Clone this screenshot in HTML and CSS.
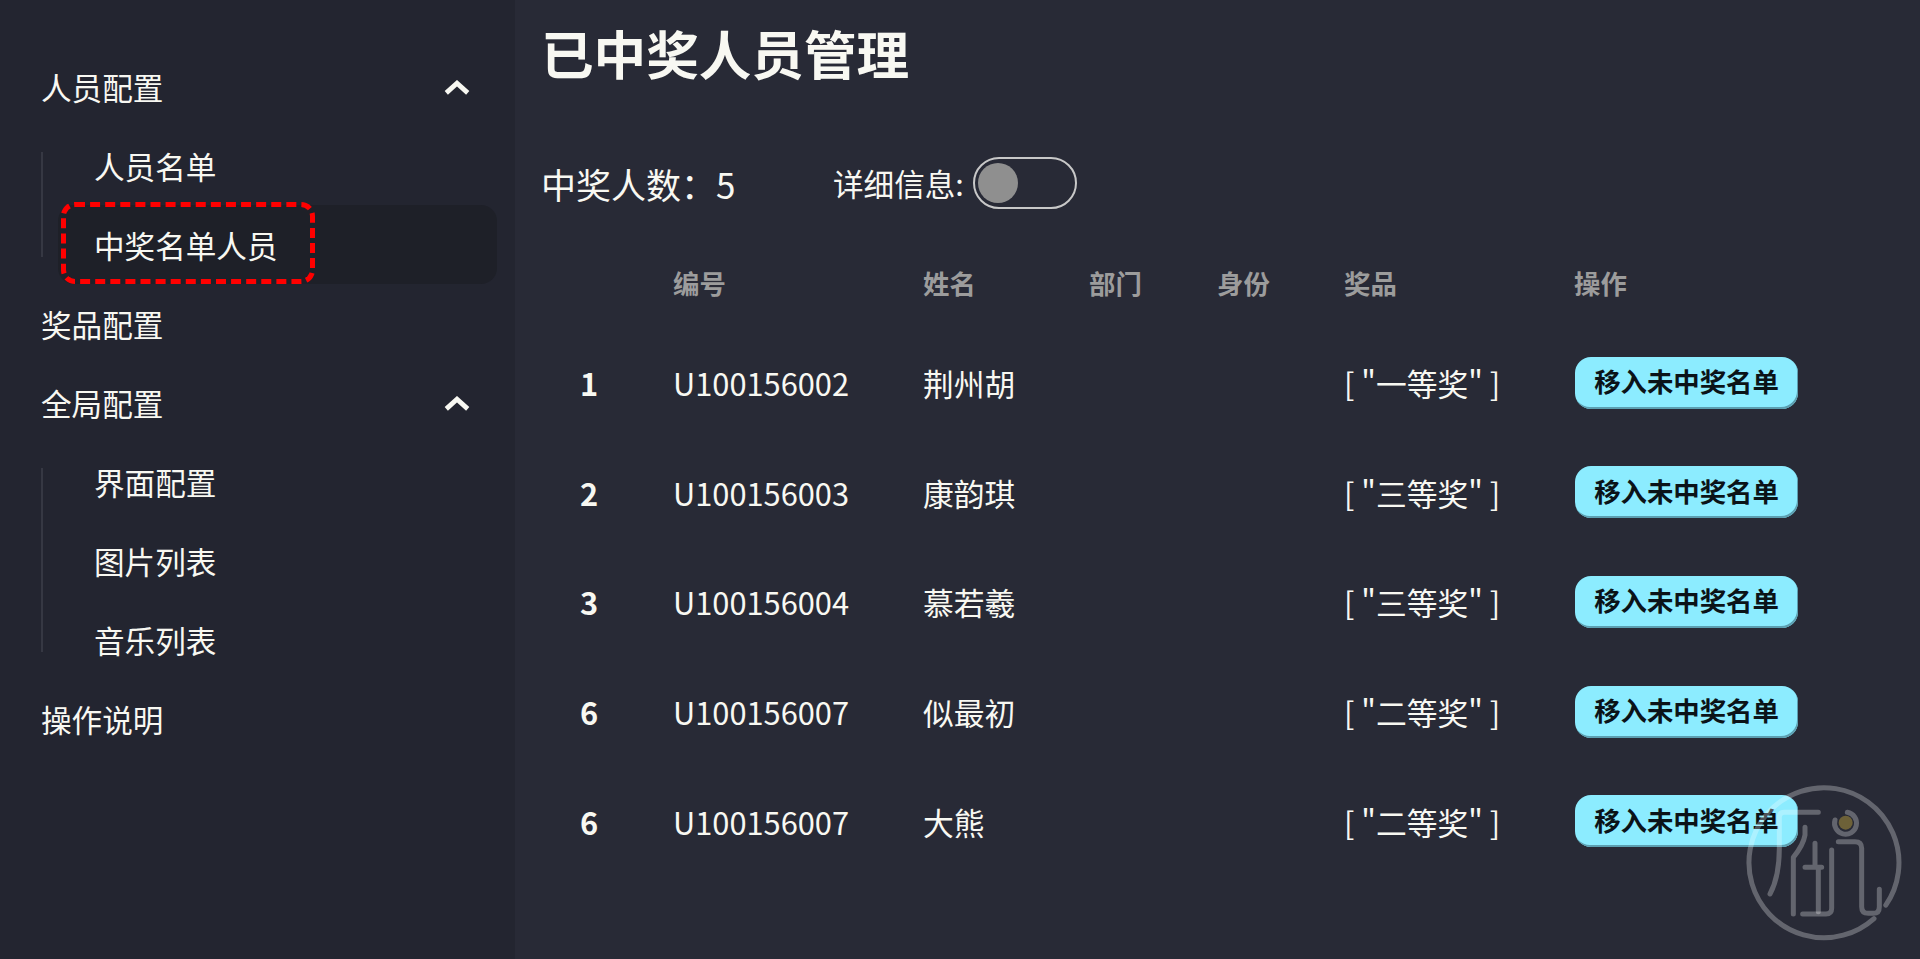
FILE: index.html
```html
<!DOCTYPE html>
<html lang="zh-CN">
<head>
<meta charset="utf-8">
<title>已中奖人员管理</title>
<link rel="stylesheet" href="styles.css">
</head>
<body>
<div class="app">
  <aside class="sidebar">
    <ul class="menu">
      <li class="item"><span>人员配置</span>
        <svg class="chevron" viewBox="0 0 24 14"><path d="M2 12 12 3l10 9"/></svg>
      </li>
      <li>
        <ul class="submenu">
          <li class="subitem">人员名单</li>
          <li class="subitem active">中奖名单人员<i class="marker"></i></li>
        </ul>
      </li>
      <li class="item"><span>奖品配置</span></li>
      <li class="item"><span>全局配置</span>
        <svg class="chevron" viewBox="0 0 24 14"><path d="M2 12 12 3l10 9"/></svg>
      </li>
      <li>
        <ul class="submenu">
          <li class="subitem">界面配置</li>
          <li class="subitem">图片列表</li>
          <li class="subitem">音乐列表</li>
        </ul>
      </li>
      <li class="item"><span>操作说明</span></li>
    </ul>
  </aside>
  <main class="main">
    <h1 class="title">已中奖人员管理</h1>
    <div class="stats">
      <span class="count">中奖人数：5</span>
      <label class="detail">详细信息:<span class="toggle"><span class="knob"></span></span></label>
    </div>
    <table class="table">
      <thead>
        <tr>
          <th class="c-idx"></th><th class="c-num">编号</th><th class="c-name">姓名</th><th class="c-dept">部门</th><th class="c-role">身份</th><th class="c-prize">奖品</th><th class="c-op">操作</th>
        </tr>
      </thead>
      <tbody>
        <tr><td class="idx">1</td><td>U100156002</td><td>荆州胡</td><td></td><td></td><td>[ "一等奖" ]</td><td><button class="btn">移入未中奖名单</button></td></tr>
        <tr><td class="idx">2</td><td>U100156003</td><td>康韵琪</td><td></td><td></td><td>[ "三等奖" ]</td><td><button class="btn">移入未中奖名单</button></td></tr>
        <tr><td class="idx">3</td><td>U100156004</td><td>慕若羲</td><td></td><td></td><td>[ "三等奖" ]</td><td><button class="btn">移入未中奖名单</button></td></tr>
        <tr><td class="idx">6</td><td>U100156007</td><td>似最初</td><td></td><td></td><td>[ "二等奖" ]</td><td><button class="btn">移入未中奖名单</button></td></tr>
        <tr><td class="idx">6</td><td>U100156007</td><td>大熊</td><td></td><td></td><td>[ "二等奖" ]</td><td><button class="btn">移入未中奖名单</button></td></tr>
      </tbody>
    </table>
  </main>
</div>
<svg class="watermark" viewBox="0 0 600 567">
  <circle class="wm-dot" cx="377" cy="158" r="21"/>
  <g class="wm-line">
    <path d="M497.4 405.4A225 225 0 1 0 462 445.7"/>
    <path d="M295 127H192Q178 127 178 142V235Q178 320 150 372"/>
    <path d="M255 172V195Q250 225 220 262V432"/>
    <path d="M285 220V292M255 292H305M295 292V425"/>
    <path d="M248 432H318Q335 432 335 415V240"/>
    <path d="M345 150A33 33 0 1 0 382 127"/>
    <path d="M355 215H405Q425 215 425 235V410Q425 430 445 430H460Q478 430 478 410V358"/>
  </g>
</svg>
</body>
</html>
```

FILE: styles.css
```css
* { box-sizing: border-box; }
html, body { margin: 0; height: 100%; overflow: hidden; }
body {
  background: #282a36;
  color: #f8f8f2;
  font-family: "Noto Sans CJK SC", "Noto Sans", sans-serif;
}
ul { list-style: none; margin: 0; padding: 0; }
.app { display: flex; height: 959px; }

.sidebar { width: 515px; flex: none; background: #232530; padding: 47px 18px 0 41px; }
.item, .subitem { display: flex; align-items: center; height: 79px; font-size: 30.6px; }
.item { justify-content: space-between; padding-right: 27px; }
.chevron { width: 26px; height: 15px; fill: none; stroke: #f8f8f2; stroke-width: 4.5; margin-top: 2px; }
.submenu { position: relative; padding-left: 17px; }
.submenu::before {
  content: ""; position: absolute; left: 0; top: 26px; bottom: 27px; width: 2px; background: #363843;
}
.subitem { position: relative; padding-left: 36px; border-radius: 16px; }
.active { background: #1e2028; }
.marker {
  position: absolute; left: 3px; top: -3px; width: 254px; height: 82px;
  border: 5px dashed #ff0000; border-radius: 14px;
}

.main { flex: 1; padding: 0 0 0 27px; }
.title { margin: 0 0 0 -1px; height: 104px; line-height: 104px; font-size: 52.6px; font-weight: 700; }
.stats { display: flex; align-items: center; height: 52px; margin-top: 53px; }
.count { width: 292px; margin-left: -1px; font-size: 35px; }
.detail { display: flex; align-items: center; gap: 9px; font-size: 30.6px; }
.toggle {
  display: flex; align-items: center; width: 104px; height: 52px; padding-left: 3px;
  border: 2px solid #c8c8c8; border-radius: 26px;
}
.knob { width: 40px; height: 40px; border-radius: 50%; background: #8f8f8f; }

.table { border-collapse: collapse; table-layout: fixed; width: 1320px; margin-top: 28px; }
.table th { height: 91px; padding: 0 16px; text-align: left; font-size: 26.4px; font-weight: 700; color: #9c9c9c; }
.table td { height: 109.6px; padding: 0 16px; font-size: 30.8px; }
.c-idx { width: 115px; }
.c-num { width: 250px; }
.c-name { width: 166px; }
.c-dept { width: 128px; }
.c-role { width: 127px; }
.c-prize { width: 230px; }
.table td.idx { padding-left: 38px; font-weight: 700; }
.btn {
  display: block; width: 223px; height: 52px; margin: 0 0 0 1px; padding: 0 0 4px;
  border: 0; border-radius: 16px; background: #8cecff; color: #0b1318;
  font: 700 26.4px "Noto Sans CJK SC", sans-serif;
  box-shadow: inset -1px -2px 0 #5c9fb1;
}

.watermark { position: absolute; left: 1720px; top: 770px; width: 200px; height: 189px; pointer-events: none; }
.wm-line { fill: none; stroke: rgba(255, 255, 255, 0.28); stroke-width: 15; stroke-linecap: round; stroke-linejoin: round; }
.wm-dot { fill: #6d6138; }
```
